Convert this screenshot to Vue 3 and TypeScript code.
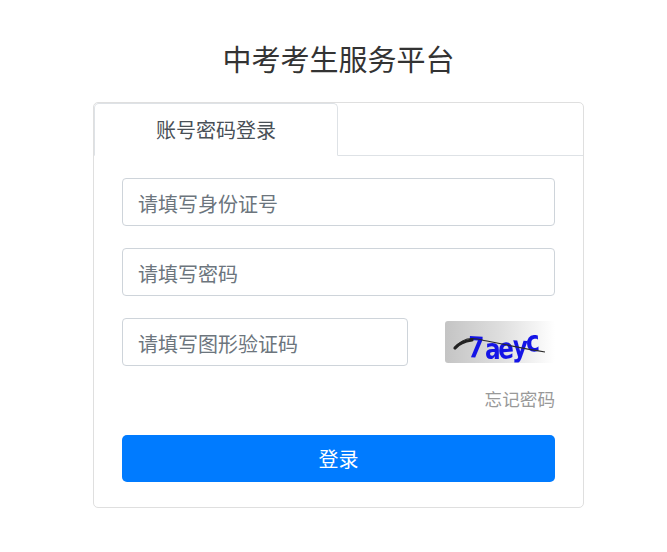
<script setup lang="ts">
const fields = ['请填写身份证号', '请填写密码']
</script>

<template>
  <div class="page">
    <h1 class="title">中考考生服务平台</h1>
    <div class="card">
      <div class="tabs">
        <div class="tab">账号密码登录</div>
      </div>
      <form class="form" @submit.prevent>
        <input v-for="f in fields" :key="f" class="input" type="text" :placeholder="f" />
        <div class="captcha-row">
          <input class="input captcha-input" type="text" placeholder="请填写图形验证码" />
          <svg class="captcha" width="110" height="42" viewBox="0 0 110 42">
            <defs>
              <linearGradient id="cg" x1="0" y1="0" x2="1" y2="0">
                <stop offset="0" stop-color="#c4c4c4" />
                <stop offset="0.5" stop-color="#dedede" />
                <stop offset="1" stop-color="#ffffff" />
              </linearGradient>
            </defs>
            <rect width="110" height="42" rx="3" fill="url(#cg)" />
            <g class="captcha-ink">
              <g transform="scale(0.8 1)">
                <text class="captcha-text" x="28 50 67 84 102" y="36 38 38 35 31" rotate="3 0 -3 3 -4">7aeyc</text>
              </g>
              <path d="M10 27 C15 20 22 16 32 18 C52 22 76 27 100 31" fill="none" stroke="#2a2a2a" stroke-width="1.2" />
              <path d="M10 27 C14 22 20 20 27 19" fill="none" stroke="#222" stroke-width="3.2" stroke-linecap="round" />
            </g>
          </svg>
        </div>
        <div class="forgot-row"><a class="forgot">忘记密码</a></div>
        <button class="submit" type="submit">登录</button>
      </form>
    </div>
  </div>
</template>

<style>
html, body { margin: 0; background: #fff; }
</style>

<style scoped>
.page {
  width: 667px;
  height: 552px;
  box-sizing: border-box;
  padding: 37px 0 0 10px;
  display: flex;
  flex-direction: column;
  align-items: center;
  font-family: "Noto Sans CJK SC", "Liberation Sans", sans-serif;
}
.title {
  margin: 0 0 23px;
  height: 42px;
  line-height: 42px;
  font-size: 29px;
  font-weight: 400;
  color: #333;
  white-space: nowrap;
}
.card {
  width: 491px;
  height: 406px;
  box-sizing: border-box;
  border: 1px solid #dfdfdf;
  border-radius: 5px;
}
.tabs {
  height: 53px;
  box-sizing: border-box;
  border-bottom: 1px solid #dee2e6;
}
.tab {
  width: 244px;
  height: 53px;
  box-sizing: border-box;
  border: 1px solid #dee2e6;
  border-bottom-color: #fff;
  border-radius: 5px 5px 0 0;
  background: #fff;
  text-align: center;
  line-height: 52px;
  font-size: 20px;
  color: #495057;
}
.form {
  padding: 22px 28px 0;
  display: flex;
  flex-direction: column;
}
.input {
  display: block;
  width: 433px;
  height: 48px;
  box-sizing: border-box;
  margin-bottom: 22px;
  padding: 2px 15px 0;
  border: 1px solid #ced4da;
  border-radius: 4px;
  outline: none;
  background: #fff;
  font-family: inherit;
  font-size: 20px;
  color: #495057;
}
.input::placeholder {
  color: #6c757d;
  opacity: 1;
}
.captcha-row {
  display: flex;
  align-items: center;
  justify-content: space-between;
  height: 48px;
}
.captcha-input {
  width: 286px;
  margin-bottom: 0;
}
.captcha { display: block; overflow: visible; }
.captcha-ink { filter: blur(0.4px); }
.captcha-text {
  font-family: "DejaVu Sans", sans-serif;
  font-size: 29px;
  font-weight: 700;
  fill: #1414e6;
}
.forgot-row {
  display: flex;
  justify-content: flex-end;
  margin-top: 19px;
  height: 27px;
  line-height: 27px;
}
.forgot {
  font-size: 17.6px;
  color: #999;
}
.submit {
  margin-top: 23px;
  height: 47px;
  border: none;
  border-radius: 5px;
  background: #007bff;
  color: #fff;
  font-family: inherit;
  font-size: 20px;
  padding: 0;
}
</style>
